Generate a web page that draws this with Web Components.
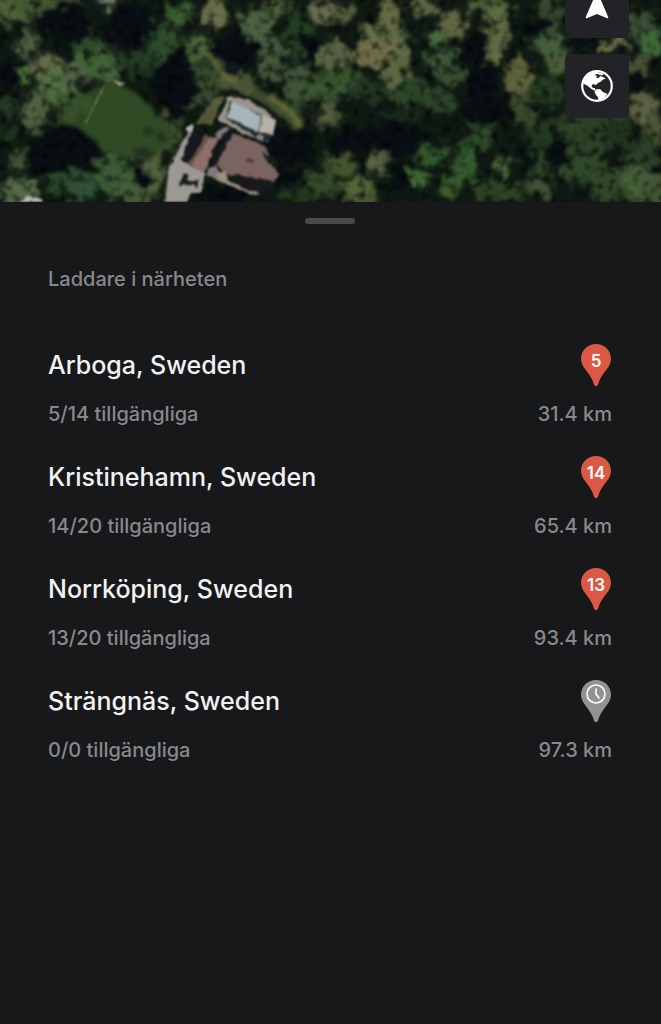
<!DOCTYPE html>
<html lang="sv">
<head>
<meta charset="utf-8">
<meta name="viewport" content="width=device-width, initial-scale=1">
<title>Laddare i närheten</title>
<style>
  body {
    margin: 0;
    min-height: 100vh;
    background: #17181a;
    color: #f2f2f3;
    font-family: Inter, "Liberation Sans", sans-serif;
  }
</style>
</head>
<body>
<satellite-map>
  <map-button label="Min position">
    <svg viewBox="0 0 32 32"><path fill="#fff" d="M16 1 27 26.500Q28 29 25.500 28L16 24 6.500 28Q4 29 5 26.500Z"/></svg>
  </map-button>
  <map-button label="Kartlager">
    <svg viewBox="0 0 32 32">
      <circle cx="16" cy="16" r="14.800" fill="none" stroke="#fff" stroke-width="2.200"/>
      <path fill="#fff" d="M2 14C3 7 9 1 15 1.500L23 4 21 5.500 16 4 13.500 5 16 6 15 7.500 18 8 19 6 22 7 25 8.500 22 9.500 20 11.500 17 13 15 15 12 14 10.500 16 12 18 14 18 14.500 20 11 19.500 8 17 4.500 14.500ZM15 19.500 19 19 22 22 26.500 24C24 28 20 31 16 31L17.500 28 15 25 13.500 22ZM11 18 13.500 19 14 21 12.500 20Z"/>
    </svg>
  </map-button>
</satellite-map>
<bottom-sheet>
  <span slot="title">Laddare i närheten</span>
  <charger-list></charger-list>
</bottom-sheet>

<script>
// tree crowns: x, y, radius x, radius y, colour
const crowns = [
  [14, 8, 28, 15, '#53663a'], [46, 4, 32, 10, '#465b33'], [109, 2, 12, 5, '#859078'],
  [28, 42, 13, 14, '#526344'], [18, 76, 12, 12, '#4d753d'], [47, 66, 19, 12, '#66714a'],
  [57, 87, 19, 18, '#557643'], [35, 112, 13, 20, '#566444'], [78, 72, 16, 13, '#57654a'],
  [95, 57, 19, 18, '#426638'], [72, 104, 20, 15, '#3f5d34'], [109, 74, 12, 13, '#4a653c'],
  [85, 45, 13, 12, '#304b2a'], [162, 41, 22, 17, '#304f2d'], [180, 14, 14, 10, '#3e6132'],
  [136, 62, 22, 11, '#263e26'], [199, 46, 13, 14, '#4c6a3d'], [215, 13, 13, 16, '#71734f'],
  [255, 25, 16, 20, '#4e6644'], [271, 58, 13, 25, '#475b3c'], [210, 78, 25, 17, '#3a4f31'],
  [199, 98, 22, 12, '#394d33'], [278, 7, 10, 8, '#5c7046'], [300, 34, 17, 22, '#253f25'],
  [322, 11, 15, 13, '#6c7250'], [299, 80, 14, 22, '#43583a'], [332, 57, 14, 13, '#59643e'],
  [329, 114, 12, 12, '#4e5c3b'], [322, 86, 16, 16, '#334c2d'], [344, 13, 11, 10, '#59613e'],
  [369, 35, 11, 12, '#6d744e'], [389, 15, 12, 19, '#6a7048'], [395, 44, 17, 12, '#63714d'],
  [377, 53, 23, 12, '#77734d'], [396, 70, 15, 16, '#626b45'], [423, 7, 16, 10, '#606a43'],
  [437, 36, 9, 9, '#4d7242'], [452, 23, 15, 14, '#656d47'], [443, 60, 15, 12, '#3f5c3a'],
  [455, 75, 12, 10, '#3d5232'], [491, 7, 22, 11, '#56683c'], [497, 28, 12, 21, '#657047'],
  [494, 56, 10, 11, '#687149'], [520, 80, 14, 20, '#64683f'], [521, 104, 14, 9, '#3e4d30'],
  [335, 54, 19, 12, '#5e6848'], [347, 77, 20, 10, '#3d552e'], [330, 90, 20, 10, '#3d5d34'],
  [370, 91, 25, 9, '#243b24'], [413, 95, 24, 13, '#304b2d'], [440, 100, 16, 12, '#2d452b'],
  [329, 117, 10, 9, '#56613e'], [379, 158, 12, 17, '#5c6744'], [341, 164, 15, 14, '#46582f'],
  [358, 191, 18, 16, '#586a3c'], [415, 180, 12, 11, '#467137'], [431, 153, 18, 11, '#345b2f'],
  [451, 186, 12, 10, '#42632f'], [466, 163, 13, 22, '#365e30'], [480, 137, 16, 13, '#304e2c'],
  [503, 164, 9, 8, '#526e3f'], [499, 191, 24, 12, '#304627'], [538, 163, 16, 12, '#304a2b'],
  [540, 187, 14, 12, '#435536'], [526, 120, 10, 9, '#3b4c31'], [550, 12, 14, 21, '#384a31'],
  [549, 42, 18, 12, '#4a6440'], [558, 65, 11, 13, '#50603d'], [549, 90, 19, 17, '#263e25'],
  [546, 134, 19, 15, '#253b24'], [574, 125, 18, 11, '#344a2a'], [591, 139, 21, 17, '#2d4428'],
  [581, 166, 20, 20, '#314a2c'], [609, 182, 22, 19, '#344b2d'], [613, 44, 14, 7, '#75754f'],
  [640, 22, 15, 16, '#405139'], [652, 43, 13, 15, '#416d38'], [638, 67, 13, 13, '#4c5538'],
  [642, 104, 15, 17, '#626846'], [654, 129, 11, 17, '#4f5b38'], [641, 158, 18, 18, '#2d442a'],
  [638, 184, 18, 18, '#49633a'], [658, 191, 13, 15, '#465937'], [622, 134, 14, 13, '#21351f'],
  [20, 162, 12, 9, '#45563b'], [15, 190, 26, 12, '#5b704b'], [63, 177, 16, 15, '#2c492e'],
  [80, 188, 15, 15, '#34533a'], [112, 172, 20, 20, '#3d5f38'], [129, 189, 18, 18, '#45613a'],
  [151, 172, 14, 30, '#566642'], [144, 143, 23, 14, '#405431'], [168, 133, 15, 18, '#42532f'],
  [300, 193, 20, 12, '#25391f'], [324, 181, 17, 15, '#384b2b'], [237, 85, 16, 14, '#4b5a39'],
  [8, 107, 10, 8, '#283d27'], [51, 130, 18, 9, '#344b30'], [292, 108, 16, 8, '#33482e'],
  [400, 118, 22, 7, '#1b2d1d'], [602, 112, 34, 12, '#304229'], [8, 133, 16, 8, '#203422']
];

// gaps between the crowns, where the ground lies in shade
const shadows = [
  [63, 24, 24, 20], [132, 27, 25, 20], [175, 82, 20, 32], [236, 50, 28, 13], [10, 75, 9, 18],
  [66, 145, 37, 21], [45, 163, 18, 15], [91, 151, 14, 11], [310, 47, 10, 12], [474, 48, 14, 13],
  [481, 80, 16, 19], [488, 111, 25, 14], [396, 138, 31, 16], [352, 143, 20, 12], [398, 178, 12, 16],
  [533, 28, 13, 9], [585, 45, 16, 5], [554, 151, 8, 16], [637, 85, 9, 12], [525, 159, 7, 12],
  [288, 145, 25, 17], [224, 195, 31, 10], [283, 178, 23, 10], [142, 180, 8, 10]
];

const ellipse = ([x, y, rx, ry, fill]) => `<ellipse cx="${x}" cy="${y}" rx="${rx}" ry="${ry}" fill="${fill}"/>`;

class SatelliteMap extends HTMLElement {
  constructor() {
    super();
    this.attachShadow({ mode: 'open' });
  }

  connectedCallback() {
    this.shadowRoot.innerHTML = `
      <style>
        :host {
          display: block;
          position: relative;
          height: 202px;
          overflow: hidden;
          background: #0b1410;
        }
        .ground {
          display: block;
          width: 100%;
          height: 100%;
        }
        .controls {
          position: absolute;
          right: 32px;
          bottom: 84px;
          display: flex;
          flex-direction: column;
          gap: 16px;
        }
      </style>
      <svg class="ground" viewBox="0 0 661 202" preserveAspectRatio="xMidYMid slice" role="img" aria-label="Satellitkarta">
        <defs>
          <filter id="foliage" x="-10" y="-10" width="681" height="222" filterUnits="userSpaceOnUse" color-interpolation-filters="sRGB">
            <feGaussianBlur in="SourceGraphic" stdDeviation="2.5" result="crowns"/>
            <feTurbulence type="fractalNoise" baseFrequency="0.07" numOctaves="3" seed="7" result="warp"/>
            <feDisplacementMap in="crowns" in2="warp" scale="24" xChannelSelector="R" yChannelSelector="G" result="leaves"/>
            <feTurbulence type="fractalNoise" baseFrequency="0.12" numOctaves="3" seed="12"/>
            <feColorMatrix values="2.4 0 0 0 -0.25  2.4 0 0 0 -0.25  2.4 0 0 0 -0.25  0 0 0 0 1" result="light"/>
            <feComposite in="leaves" in2="light" operator="arithmetic" k1="0.75" k2="0.2"/>
            <feGaussianBlur stdDeviation="1.1"/>
          </filter>
          <filter id="soft" x="0" y="0" width="661" height="202" filterUnits="userSpaceOnUse" color-interpolation-filters="sRGB">
            <feTurbulence type="fractalNoise" baseFrequency="0.15" numOctaves="2" seed="3" result="warp"/>
            <feDisplacementMap in="SourceGraphic" in2="warp" scale="4" xChannelSelector="R" yChannelSelector="G"/>
            <feGaussianBlur stdDeviation="1"/>
          </filter>
          <filter id="grass" x="40" y="40" width="290" height="130" filterUnits="userSpaceOnUse" color-interpolation-filters="sRGB">
            <feTurbulence type="fractalNoise" baseFrequency="0.09" numOctaves="3" seed="5" result="warp"/>
            <feDisplacementMap in="SourceGraphic" in2="warp" scale="10" xChannelSelector="R" yChannelSelector="G"/>
            <feGaussianBlur stdDeviation="2"/>
          </filter>
        </defs>
        <g filter="url(#foliage)">
          <rect x="-30" y="-30" width="721" height="262" fill="#101a14"/>
          ${crowns.map(ellipse).join('')}
          ${shadows.map(s => ellipse([...s, '#080e14'])).join('')}
        </g>
        <g filter="url(#grass)">
          <path fill="#2f4a24" d="M107 82 120 84 137 93 150 107 157 118 170 124 176 134 164 149 145 155 126 157 106 152 88 139 80 128Z"/>
          <path fill="#364f29" opacity=".8" d="M82 130 106 84 98 86 64 108 58 122Z"/>
          <path fill="#1c2b1a" opacity=".8" d="m145 126 8 1 2 6-9 2zM162 133l5 4-3 7-5-4zM134 149l12-1 10 7-6 7-13-2z"/>
          <path fill="none" stroke="#4b5633" stroke-width="12" opacity=".8" d="M221 72 245 88 263 97 284 110 300 126"/>
          <path fill="none" stroke="#75733f" stroke-width="5" opacity=".8" d="M211 55 219 72 235 82M268 97 288 109 303 128"/>
        </g>
        <g filter="url(#soft)">
          <path fill="none" stroke="#788154" stroke-width="1.500" opacity=".8" d="M105 84 86 123"/>
          <path fill="#9a9e78" d="m114 80 12 4-7 2z"/>
          <path fill="#656541" opacity=".8" d="m216 98 8-3-12 30-17-2 8-9z"/>
          <path fill="#10191d" d="m226 62 9-2 6 7-5 8-12-3z"/>
          <path fill="#151d16" d="m229 89 9 2 24 13 17 12-9 4-12-11-27-10z"/>
          <path fill="#9b968c" d="m228 97 19 2 23 15 6 9-8 19-22-7-29-15z"/>
          <path fill="#28302f" d="m230 102 32 13-3 19-5 2-28-18z"/>
          <path fill="#a5b5bb" d="m233 102 28 14-3 17-31-16z"/>
          <path fill="#b7b1a5" d="m263 116 13 4-3 15-14-5z"/>
          <path fill="#1d2227" d="m255 132 16 2-3 7-14-3z"/>
          <path fill="#7d8288" d="m258 134 7 2-3 5-7-2z"/>
          <path fill="#15181f" d="m183 130 21 3-18 32-10-4zM218 122l14 5 2 14-14 27-10 0 13-28-5-5z"/>
          <path fill="#9b9992" d="M183 141 190 130 194 128 188 139 181 160 206 174 200 193 191 193 187 202 163 202 168 168Z"/>
          <path fill="none" stroke="#292f21" stroke-width="2" d="M164 202 168 168 181 143"/>
          <path fill="#695544" d="m206 135 6 3-17 31-7-5z"/>
          <path fill="#906f6b" d="m209 138 9-1-14 37-12-9z"/>
          <path fill="#7b6360" d="m233 133 30 12 5 8 11 23-6 6-44-7-13-10z"/>
          <path fill="#807876" d="m216 133 7-7 7 2-12 13zM207 168l9-2 5 13-14-3z"/>
          <path fill="#9c9283" d="m217 173 9-2 2 9 34 13-8 2-38-15z"/>
          <path fill="#18191a" d="m230 174 45 7-3 8-11 5-30-11z"/>
          <path fill="#181d1e" d="m184 173 5 2-2 5 8 2 4-3-2 9-4-3-9-1-5 3zM262 152l12 7 4 12-10-8z"/>
          <path fill="none" stroke="#4c3737" stroke-width="3" d="m247 159 6 3"/>
          <path fill="#b3b7b0" d="m186 127 7-2 1 4-6 3zM20 202l8-6 10 1 6 5z"/>
        </g>
      </svg>
      <div class="controls"><slot></slot></div>
    `;
  }
}
customElements.define('satellite-map', SatelliteMap);

class MapButton extends HTMLElement {
  constructor() {
    super();
    this.attachShadow({ mode: 'open' });
  }

  connectedCallback() {
    this.shadowRoot.innerHTML = `
      <style>
        :host {
          display: block;
        }
        button {
          display: grid;
          place-items: center;
          width: 64px;
          height: 64px;
          padding: 0;
          border: 0;
          border-radius: 6px;
          background: #222327;
          cursor: pointer;
        }
        ::slotted(svg) {
          width: 32px;
          height: 32px;
        }
      </style>
      <button type="button" aria-label="${this.getAttribute('label')}"><slot></slot></button>
    `;
  }
}
customElements.define('map-button', MapButton);

class BottomSheet extends HTMLElement {
  constructor() {
    super();
    this.attachShadow({ mode: 'open' });
  }

  connectedCallback() {
    this.shadowRoot.innerHTML = `
      <style>
        :host {
          display: block;
          padding: 16px 49px 48px 48px;
          background: #17181a;
        }
        .handle {
          width: 50px;
          height: 6px;
          margin: 0 auto 40px;
          border-radius: 3px;
          background: #48494b;
        }
        h2 {
          margin: 0 0 49px;
          color: #88898b;
          font-size: 20px;
          font-weight: 500;
          line-height: 30px;
        }
      </style>
      <div class="handle"></div>
      <h2><slot name="title"></slot></h2>
      <slot></slot>
    `;
  }
}
customElements.define('bottom-sheet', BottomSheet);

class ChargerPin extends HTMLElement {
  constructor() {
    super();
    this.attachShadow({ mode: 'open' });
  }

  connectedCallback() {
    const count = Number(this.getAttribute('count'));
    const clock = `
      <circle cx="16" cy="15" r="9" fill="none" stroke="#fff" stroke-width="1.600"/>
      <path d="M16 10v5l3 4" fill="none" stroke="#fff" stroke-width="1.600" stroke-linecap="round"/>
    `;

    this.shadowRoot.innerHTML = `
      <style>
        :host {
          display: grid;
          width: 32px;
          height: 44px;
        }
        svg, span {
          grid-area: 1 / 1;
        }
        svg {
          width: 32px;
          height: 44px;
        }
        span {
          color: #fff;
          font-size: 17px;
          font-weight: 600;
          line-height: 36px;
          text-align: center;
        }
      </style>
      <svg viewBox="0 0 32 44">
        <path fill="${count ? '#dc5844' : '#929292'}" d="M16 1C24.500 1 31 7.500 31 16 31 25 21 30 18 41.500 17.500 43.500 14.500 43.500 14 41.500 11 30 1 25 1 16 1 7.500 7.500 1 16 1Z"/>
        ${count ? '' : clock}
      </svg>
      ${count ? `<span>${count}</span>` : ''}
    `;
  }
}
customElements.define('charger-pin', ChargerPin);

class ChargerItem extends HTMLElement {
  constructor() {
    super();
    this.attachShadow({ mode: 'open' });
  }

  set charger(charger) {
    this._charger = charger;
    this.render();
  }

  render() {
    const { name, free, total, distance } = this._charger;
    this.shadowRoot.innerHTML = `
      <style>
        :host {
          display: grid;
          grid-template-columns: 1fr auto;
          row-gap: 13px;
          align-items: center;
        }
        h3, p {
          margin: 0;
        }
        h3 {
          font-size: 25px;
          font-weight: 500;
          line-height: 32px;
        }
        p {
          color: #88898b;
          font-size: 20px;
          font-weight: 500;
          line-height: 28px;
        }
        charger-pin {
          justify-self: end;
        }
      </style>
      <h3>${name}</h3>
      <charger-pin count="${free}"></charger-pin>
      <p>${free}/${total} tillgängliga</p>
      <p>${distance} km</p>
    `;
  }
}
customElements.define('charger-item', ChargerItem);

class ChargerList extends HTMLElement {
  constructor() {
    super();
    this.attachShadow({ mode: 'open' });
  }

  connectedCallback() {
    this.shadowRoot.innerHTML = `
      <style>
        :host {
          display: flex;
          flex-direction: column;
          gap: 27px;
        }
      </style>
    `;
    const chargers = [
      { name: 'Arboga, Sweden', free: 5, total: 14, distance: '31.4' },
      { name: 'Kristinehamn, Sweden', free: 14, total: 20, distance: '65.4' },
      { name: 'Norrköping, Sweden', free: 13, total: 20, distance: '93.4' },
      { name: 'Strängnäs, Sweden', free: 0, total: 0, distance: '97.3' }
    ];
    chargers.forEach(charger => {
      const item = document.createElement('charger-item');
      item.charger = charger;
      this.shadowRoot.appendChild(item);
    });
  }
}
customElements.define('charger-list', ChargerList);
</script>
</body>
</html>
